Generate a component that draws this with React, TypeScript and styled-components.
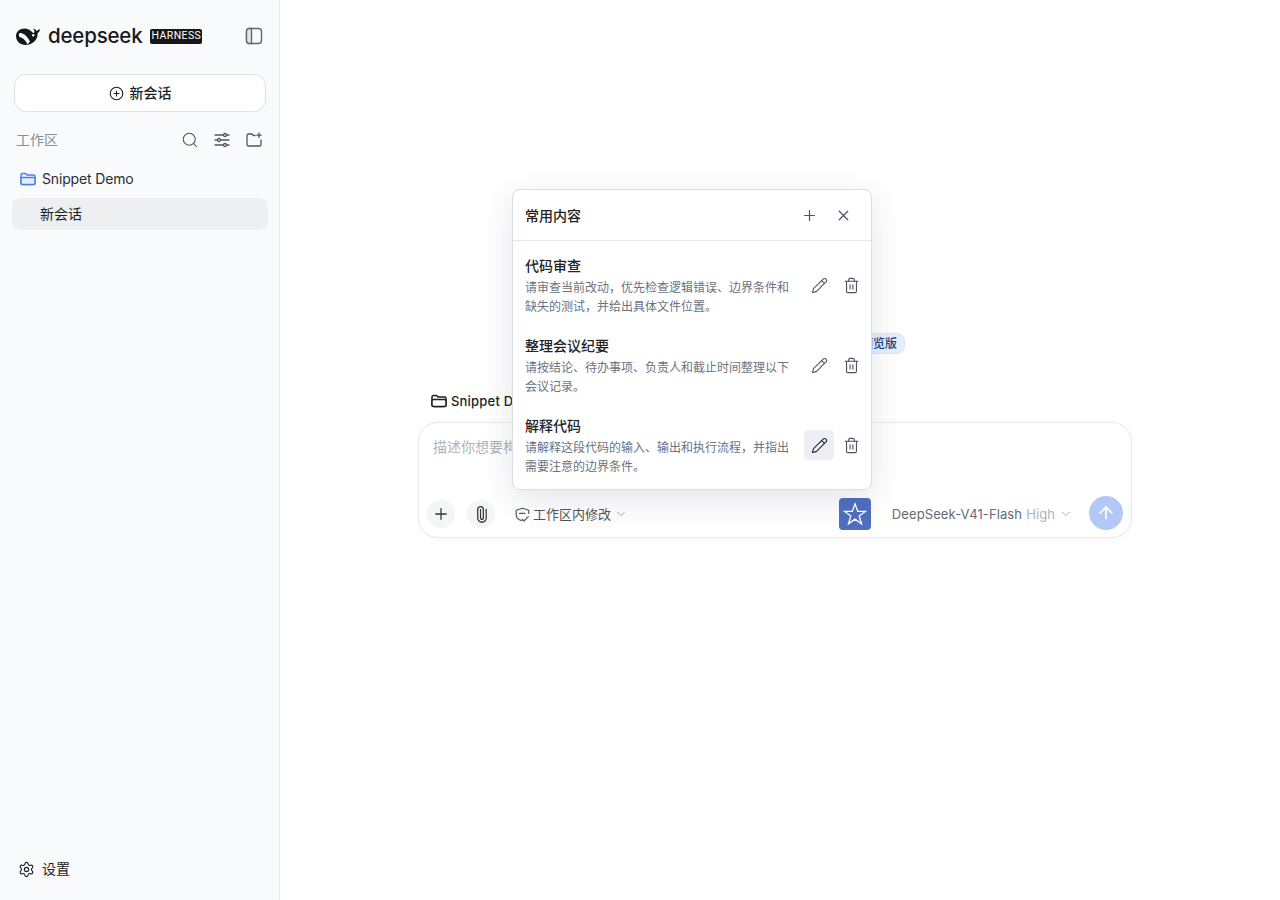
import React from 'react';
import styled, { createGlobalStyle } from 'styled-components';
import { ArrowUp, ChevronDown, CirclePlus, Paperclip, Pencil, Plus, Search, Settings, Trash2, X } from 'lucide-react';

const snippets = [
  { title: '代码审查', body: '请审查当前改动，优先检查逻辑错误、边界条件和缺失的测试，并给出具体文件位置。' },
  { title: '整理会议纪要', body: '请按结论、待办事项、负责人和截止时间整理以下会议记录。' },
  { title: '解释代码', body: '请解释这段代码的输入、输出和执行流程，并指出需要注意的边界条件。', active: true },
];

function WhaleLogo() {
  return (
    <svg width="25" height="19" viewBox="0 0 25 19">
      <path
        d="M0 9C0 4.500 4 1.500 8.500 1.500c3 0 5.500 1.500 7.500 3.500 1 1 1.800 1.200 2.300.5.400-.8.100-2.200-1-4 1.600.3 2.700 1.300 3.300 2.500.8-.9 2-1.500 3.600-1.500-.4 1.600-1.300 2.800-2.600 3.500.3 3.500-1.100 6.800-3.800 9-2.300 1.900-5 3-8 3C4 18 0 14 0 9Z"
        fill="#15171a"
      />
      <path d="M3.500 6c4 0 7.500 2.600 10.500 8.500l-2.500 3c-1.500-3.500-3.500-6.300-8-7.500-.8-1.500-.8-2.800 0-4Z" fill="#f9fafc" />
      <circle cx="17.200" cy="8.200" r="1.200" fill="#f9fafc" />
    </svg>
  );
}

function PanelIcon() {
  return (
    <svg width="18" height="18" viewBox="0 0 18 18" fill="none" stroke="#5f6672" strokeWidth="1.400">
      <rect x="1.500" y="1.500" width="15" height="15" rx="3" />
      <path d="M1.500 4.500a3 3 0 0 1 3-3h2v15h-2a3 3 0 0 1-3-3Z" fill="#e4e6ea" />
    </svg>
  );
}

function TuneIcon() {
  return (
    <svg width="16" height="16" viewBox="0 0 16 16" fill="none" stroke="#4f5662" strokeWidth="1.300" strokeLinecap="round">
      <path d="M1 3h8.500M12.500 3H15M1 8h2.500M6.500 8H15M1 13h8.500M12.500 13H15" />
      <circle cx="11" cy="3" r="1.500" />
      <circle cx="5" cy="8" r="1.500" />
      <circle cx="11" cy="13" r="1.500" />
    </svg>
  );
}

function FolderPlusIcon() {
  return (
    <svg width="16" height="16" viewBox="0 0 16 16" fill="none" stroke="#4f5662" strokeWidth="1.300" strokeLinecap="round" strokeLinejoin="round">
      <path d="M9 3.500H7.300L6 2H2.500A1.500 1.500 0 0 0 1 3.500v9A1.500 1.500 0 0 0 2.500 14h11a1.500 1.500 0 0 0 1.500-1.500V8" />
      <path d="M13 1v4.400M10.800 3.200h4.400" />
    </svg>
  );
}

function FolderIcon({ color, fill }: { color: string; fill: string }) {
  return (
    <svg width="16" height="16" viewBox="0 0 16 16" fill="none" stroke={color} strokeWidth="1.500" strokeLinejoin="round">
      <path d="M1 4A1.500 1.500 0 0 1 2.500 2.500h3l1.500 1.500h6.500A1.500 1.500 0 0 1 15 5.500v6.500a1.500 1.500 0 0 1-1.500 1.500h-11A1.500 1.500 0 0 1 1 12Z" />
      <path d="M1 7.300c.3-.5.800-.8 1.500-.8h11c.7 0 1.200.3 1.500.8V12a1.500 1.500 0 0 1-1.500 1.500h-11A1.500 1.500 0 0 1 1 12Z" fill={fill} />
    </svg>
  );
}

function ShieldIcon() {
  return (
    <svg width="15" height="15" viewBox="0 0 15 15" fill="none" stroke="#565b64" strokeWidth="1.200" strokeLinecap="round" strokeLinejoin="round">
      <path d="M6.800 13.600C3.500 12.800 1.200 10.700 1.200 7.500V3.200L7.500 1.200l6.300 2v3.300" />
      <path d="M4.500 6.300h5.500M7.200 12.300l1.800 1.700 4.300-4.300" />
    </svg>
  );
}

function StarIcon() {
  return (
    <svg width="24" height="24" viewBox="0 0 24 24" fill="none" stroke="#fff" strokeWidth="1.300" strokeLinejoin="miter">
      <path d="M12 1.800 14.700 9.300H22.600L16.200 14 18.500 21.800 12 17.100 5.500 21.800 7.800 14 1.400 9.300H9.300Z" />
    </svg>
  );
}

export default function App() {
  return (
    <Page>
      <GlobalStyle />
      <Sidebar>
        <BrandRow>
          <WhaleLogo />
          <Wordmark>deepseek</Wordmark>
          <HarnessTag>HARNESS</HarnessTag>
          <PanelButton>
            <PanelIcon />
          </PanelButton>
        </BrandRow>
        <NewChatButton>
          <CirclePlus size={15} strokeWidth={1.8} />
          新会话
        </NewChatButton>
        <SectionRow>
          <SectionLabel>工作区</SectionLabel>
          <SectionButton>
            <Search size={18} strokeWidth={1.4} color="#4f5662" />
          </SectionButton>
          <SectionButton>
            <TuneIcon />
          </SectionButton>
          <SectionButton>
            <FolderPlusIcon />
          </SectionButton>
        </SectionRow>
        <WorkspaceRow>
          <FolderIcon color="#4b7fe8" fill="#e8effc" />
          Snippet Demo
        </WorkspaceRow>
        <SessionRow>新会话</SessionRow>
        <SettingsRow>
          <Settings size={17} strokeWidth={1.6} />
          设置
        </SettingsRow>
      </Sidebar>
      <Main>
        <Column>
          <HeroRow>
            <HeroTitle>DeepSeek Harness</HeroTitle>
            <PreviewBadge>预览版</PreviewBadge>
          </HeroRow>
          <ProjectChip>
            <FolderIcon color="#1c1f24" fill="#fff" />
            Snippet Demo
          </ProjectChip>
          <Composer>
            <PromptInput placeholder="描述你想要构建的内容" />
            <Toolbar>
              <RoundButton>
                <Plus size={18} strokeWidth={1.7} />
              </RoundButton>
              <RoundButton>
                <ClipIcon size={17} strokeWidth={1.8} />
              </RoundButton>
              <ModeSelect>
                <ShieldIcon />
                工作区内修改
                <ChevronDown size={14} strokeWidth={1.4} color="#9a9fa8" />
              </ModeSelect>
              <StarButton>
                <StarIcon />
              </StarButton>
              <ModelSelect>
                DeepSeek-V41-Flash
                <ModelLevel>High</ModelLevel>
                <ChevronDown size={14} strokeWidth={1.4} color="#9a9fa8" />
              </ModelSelect>
              <SendButton>
                <ArrowUp size={20} strokeWidth={2} />
              </SendButton>
            </Toolbar>
          </Composer>
        </Column>
      </Main>
      <SnippetPanel>
        <PanelHeader>
          <PanelTitle>常用内容</PanelTitle>
          <HeaderButton>
            <Plus size={17} strokeWidth={1.7} />
          </HeaderButton>
          <HeaderButton>
            <X size={17} strokeWidth={1.7} />
          </HeaderButton>
        </PanelHeader>
        <SnippetList>
          {snippets.map((item) => (
            <SnippetRow key={item.title}>
              <SnippetText>
                <SnippetTitle>{item.title}</SnippetTitle>
                <SnippetBody>{item.body}</SnippetBody>
              </SnippetText>
              <RowButton $active={item.active}>
                <Pencil size={17} strokeWidth={1.5} />
              </RowButton>
              <RowButton>
                <Trash2 size={17} strokeWidth={1.6} />
              </RowButton>
            </SnippetRow>
          ))}
        </SnippetList>
      </SnippetPanel>
    </Page>
  );
}

const GlobalStyle = createGlobalStyle`
  html, body {
    margin: 0;
    height: 100%;
    background: #fff;
  }
  body {
    font-family: Inter, "Noto Sans CJK SC", sans-serif;
    line-height: 20px;
    color: #1c1f24;
  }
  button, textarea {
    font-family: inherit;
  }
`;

const Page = styled.div`
  position: relative;
  display: flex;
  height: 100vh;
  overflow: hidden;
`;

const Sidebar = styled.aside`
  width: 280px;
  flex-shrink: 0;
  box-sizing: border-box;
  display: flex;
  flex-direction: column;
  background: #f9fafc;
  border-right: 1px solid #e6e8ec;
`;

const BrandRow = styled.div`
  height: 72px;
  display: flex;
  align-items: center;
  padding: 0 16px;
`;

const Wordmark = styled.span`
  margin-left: 7px;
  font-size: 20.500px;
  font-weight: 500;
  line-height: 1;
  letter-spacing: -0.2px;
  color: #17191c;
`;

const HarnessTag = styled.span`
  margin-left: 8px;
  width: 52px;
  height: 15px;
  display: flex;
  align-items: center;
  justify-content: center;
  background: #15171a;
  border-radius: 2px;
  color: #fff;
  font-family: Roboto, sans-serif;
  font-size: 10.500px;
  font-weight: 400;
  letter-spacing: 0.4px;
`;

const PanelButton = styled.button`
  margin-left: auto;
  padding: 0;
  border: 0;
  background: none;
  display: flex;
`;

const NewChatButton = styled.button`
  margin: 2px 13px 0 14px;
  height: 38px;
  box-sizing: border-box;
  padding: 0 0 2px;
  display: flex;
  align-items: center;
  justify-content: center;
  gap: 6px;
  background: #fff;
  border: 1px solid #dfe1e5;
  border-radius: 12px;
  color: #1c1f24;
  font-size: 14px;
  font-weight: 500;

  svg {
    margin-top: 2px;
  }
`;

const SectionRow = styled.div`
  margin-top: 12px;
  height: 32px;
  display: flex;
  align-items: center;
  padding: 0 9px 0 16px;
`;

const SectionLabel = styled.span`
  margin-right: auto;
  font-size: 14px;
  color: #8a8f98;
`;

const SectionButton = styled.button`
  width: 32px;
  height: 32px;
  padding: 0;
  border: 0;
  background: none;
  display: flex;
  align-items: center;
  justify-content: center;
`;

const WorkspaceRow = styled.div`
  margin-top: 7px;
  height: 32px;
  display: flex;
  align-items: center;
  gap: 6px;
  padding-left: 20px;
  font-size: 14px;
  letter-spacing: -0.15px;
  color: #2b2e33;
`;

const SessionRow = styled.div`
  margin: 3px 11px 0 12px;
  height: 32px;
  display: flex;
  align-items: center;
  padding-left: 28px;
  background: #eeeff1;
  border-radius: 8px;
  font-size: 14px;
`;

const SettingsRow = styled.div`
  margin-top: auto;
  margin-bottom: 15px;
  height: 32px;
  display: flex;
  align-items: center;
  gap: 7px;
  padding-left: 18px;
  font-size: 14px;
`;

const Main = styled.main`
  flex: 1;
  box-sizing: border-box;
  padding: 333px 10px 0 0;
  display: flex;
  justify-content: center;
`;

const Column = styled.div`
  width: 714px;
  display: flex;
  flex-direction: column;
`;

const HeroRow = styled.div`
  height: 21px;
  display: flex;
  align-items: center;
  justify-content: center;
  gap: 8px;
`;

const HeroTitle = styled.div`
  width: 200px;
  font-size: 20px;
  font-weight: 600;
  white-space: nowrap;
`;

const PreviewBadge = styled.span`
  width: 52px;
  height: 21px;
  box-sizing: border-box;
  display: flex;
  align-items: center;
  justify-content: center;
  background: #e6eefc;
  border: 1px solid #dbe5f8;
  border-radius: 8px;
  color: #1d3f85;
  font-size: 12px;
  font-weight: 500;
`;

const ProjectChip = styled.div`
  margin-top: 36px;
  height: 22px;
  display: flex;
  align-items: center;
  gap: 4px;
  padding-left: 13px;
  font-size: 13px;
  font-weight: 500;
  letter-spacing: 0.2px;
`;

const Composer = styled.div`
  margin-top: 10px;
  height: 116px;
  box-sizing: border-box;
  display: flex;
  flex-direction: column;
  background: #fff;
  border: 1px solid #e8e9ec;
  border-radius: 20px;
  box-shadow: 0 2px 8px rgba(20, 30, 50, 0.03);
`;

const PromptInput = styled.textarea`
  flex: 1;
  padding: 14px 14px 0;
  border: 0;
  outline: 0;
  resize: none;
  background: none;
  font-size: 14px;
  line-height: 20px;

  &::placeholder {
    color: #b0b3b8;
  }
`;

const Toolbar = styled.div`
  height: 34px;
  display: flex;
  align-items: center;
  padding: 0 8px 6px;
`;

const RoundButton = styled.button`
  width: 28px;
  height: 28px;
  margin-right: 12px;
  padding: 0;
  border: 0;
  border-radius: 50%;
  background: #f4f5f6;
  color: #33363c;
  display: flex;
  align-items: center;
  justify-content: center;
`;

const ClipIcon = styled(Paperclip)`
  transform: rotate(-45deg);
`;

const ModeSelect = styled.div`
  margin-left: 8px;
  display: flex;
  align-items: center;
  gap: 3px;
  color: #4f545c;
  font-size: 13px;
`;

const StarButton = styled.button`
  margin-left: auto;
  width: 32px;
  height: 32px;
  padding: 0;
  border: 0;
  border-radius: 4px;
  background: #4f6fc0;
  display: flex;
  align-items: center;
  justify-content: center;
`;

const ModelSelect = styled.div`
  margin-left: 21px;
  display: flex;
  align-items: center;
  gap: 4px;
  color: #666b73;
  font-size: 13px;
  letter-spacing: 0.1px;
`;

const ModelLevel = styled.span`
  color: #aeb2b8;
`;

const SendButton = styled.button`
  margin: 0 0 2px 16px;
  width: 34px;
  height: 34px;
  padding: 0;
  border: 0;
  border-radius: 50%;
  background: #b3c9f5;
  color: #fff;
  display: flex;
  align-items: center;
  justify-content: center;
`;

const SnippetPanel = styled.section`
  position: absolute;
  left: 512px;
  top: 189px;
  width: 360px;
  box-sizing: border-box;
  background: #fff;
  border: 1px solid #d9dde6;
  border-radius: 8px;
  box-shadow: 0 10px 32px rgba(30, 40, 70, 0.12);
`;

const PanelHeader = styled.header`
  height: 50px;
  display: flex;
  align-items: center;
  padding: 0 13px 0 12px;
  border-bottom: 1px solid #e6e8ec;
`;

const PanelTitle = styled.h2`
  margin: 2px auto 0 0;
  font-size: 14px;
  font-weight: 500;
  color: #1f2329;
`;

const HeaderButton = styled.button`
  width: 30px;
  height: 30px;
  margin-left: 4px;
  padding: 0;
  border: 0;
  background: none;
  color: #4b5468;
  display: flex;
  align-items: center;
  justify-content: center;
`;

const SnippetList = styled.div`
  padding: 5px 0 3px;
`;

const SnippetRow = styled.div`
  height: 80px;
  box-sizing: border-box;
  display: flex;
  align-items: center;
  gap: 2px;
  padding: 0 4px 0 12px;
`;

const SnippetText = styled.div`
  width: 270px;
  margin-right: 7px;
`;

const SnippetTitle = styled.div`
  margin-bottom: 2px;
  font-size: 14px;
  font-weight: 500;
  line-height: 20px;
  color: #1f2329;
`;

const SnippetBody = styled.div`
  font-size: 12px;
  line-height: 19px;
  color: #6b7280;
`;

const RowButton = styled.button<{ $active?: boolean }>`
  width: 30px;
  height: 30px;
  flex-shrink: 0;
  margin-bottom: 2px;
  padding: 0;
  border: 0;
  border-radius: 4px;
  background: ${(p) => (p.$active ? '#eeeff4' : 'none')};
  color: ${(p) => (p.$active ? '#1f2329' : '#4b5468')};
  display: flex;
  align-items: center;
  justify-content: center;
`;
